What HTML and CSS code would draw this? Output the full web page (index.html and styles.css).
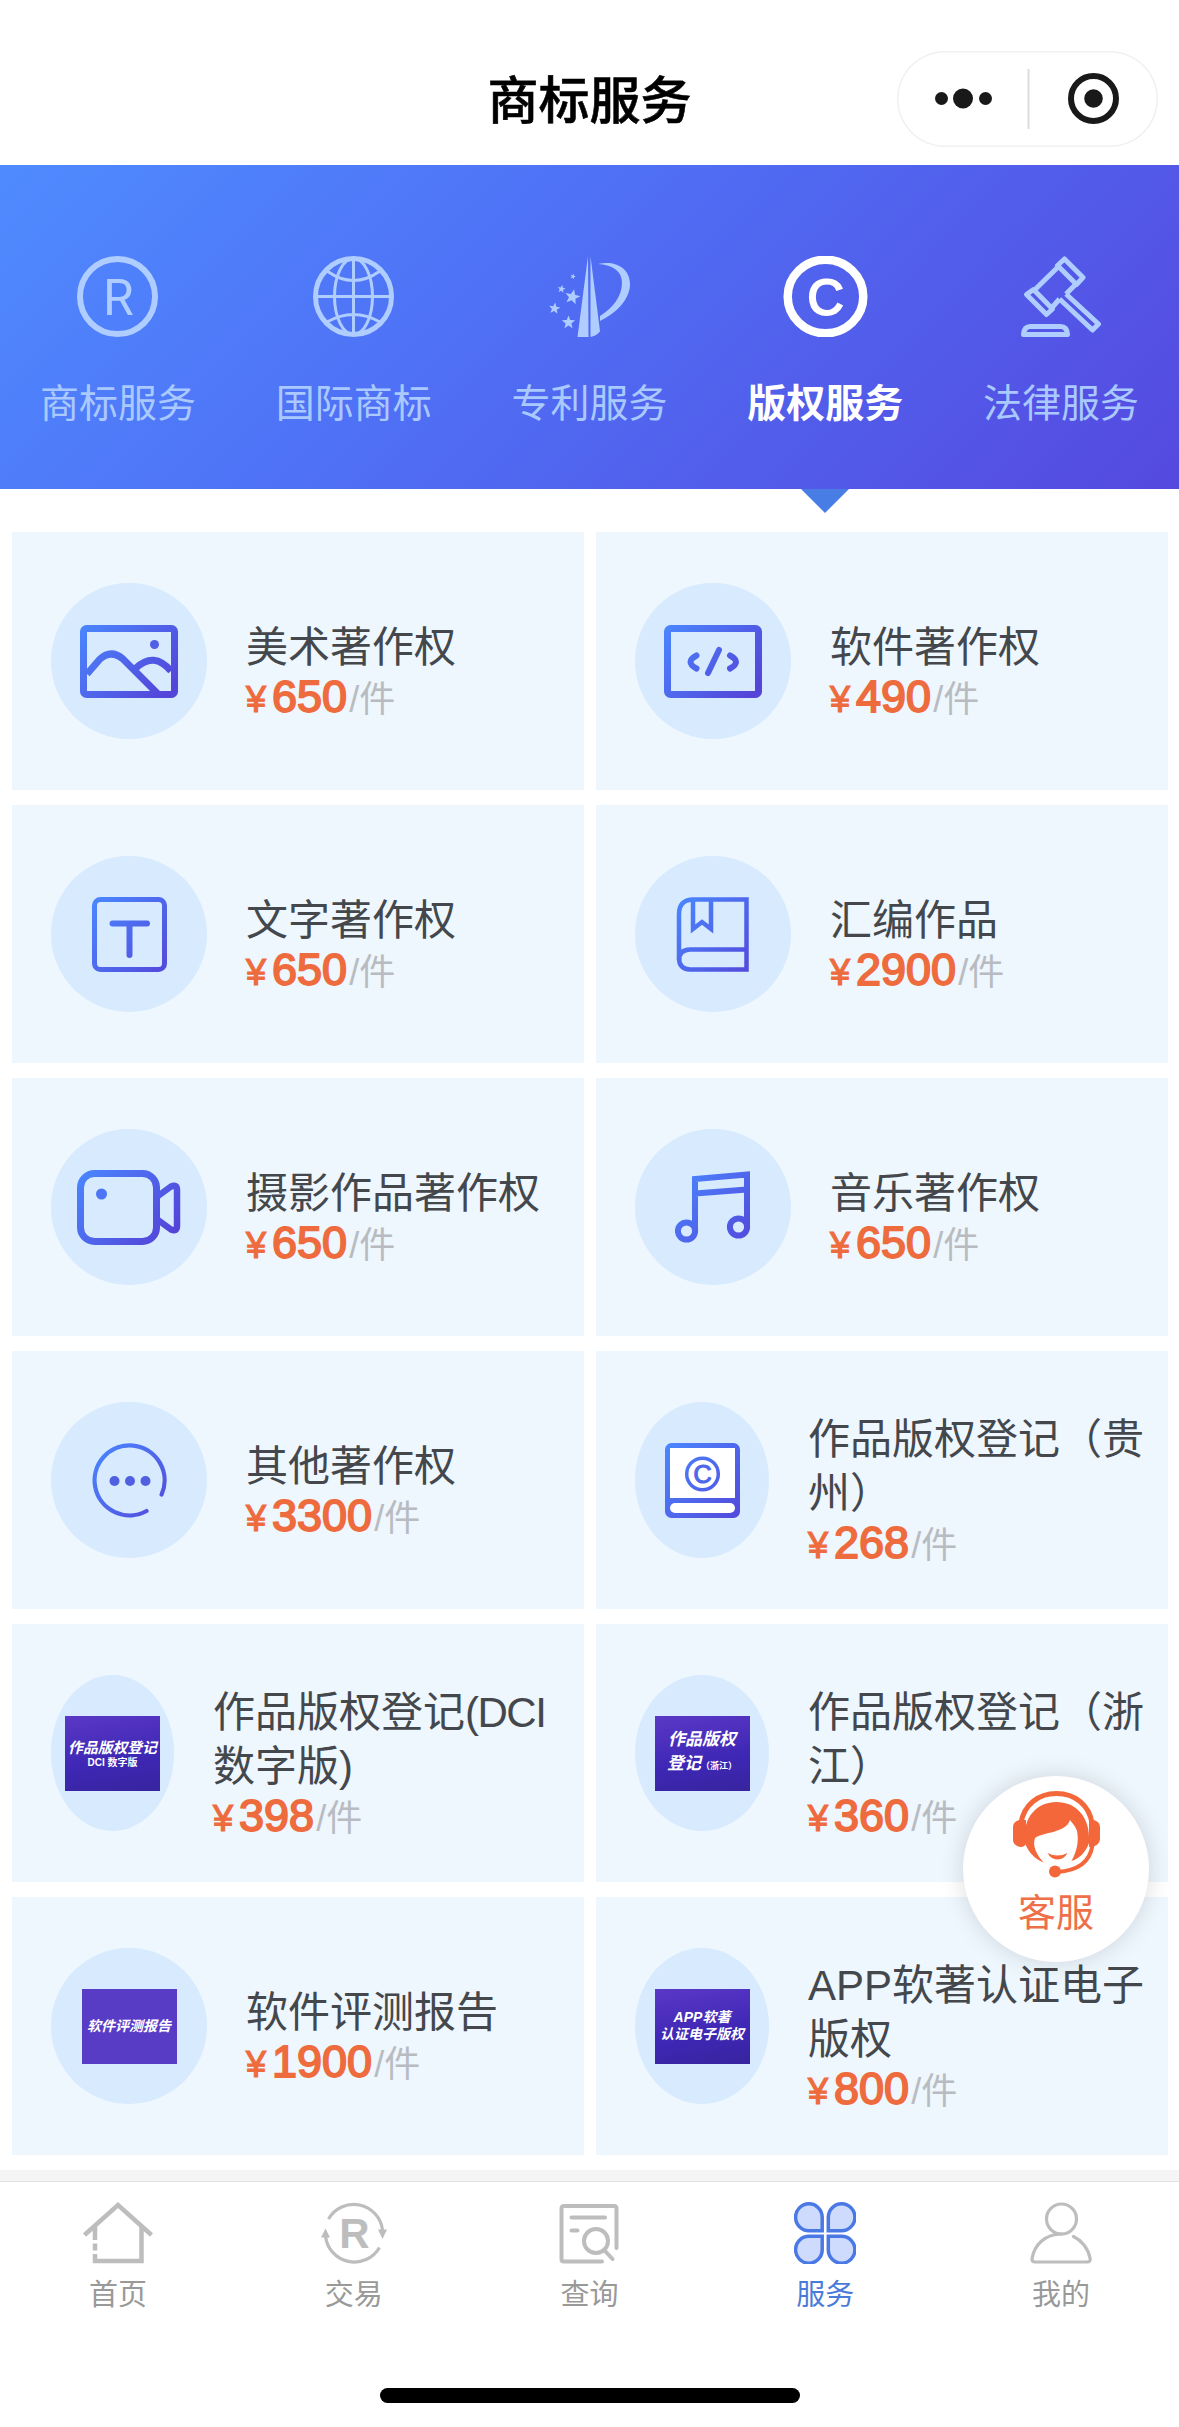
FILE: index.html
```html
<!DOCTYPE html>
<html lang="zh-CN">

<head>
    <meta charset="UTF-8" />
    <meta name="viewport" content="width=device-width, initial-scale=1.0" />
    <title>商标服务</title>
    <link rel="stylesheet" href="styles.css">
</head>

<body>
    <!-- shared gradient and star shape -->
    <svg class="defs" width="0" height="0">
        <defs>
            <linearGradient id="blue" gradientUnits="userSpaceOnUse" x1="0" y1="0" x2="85" y2="75">
                <stop offset="0" stop-color="#4a88ff" />
                <stop offset="1" stop-color="#5444d8" />
            </linearGradient>
            <polygon id="star" points="0,-10 2.6,-3.4 9.5,-3.1 4.1,1.3 5.9,8.1 0,4.3 -5.9,8.1 -4.1,1.3 -9.5,-3.1 -2.6,-3.4" />
        </defs>
    </svg>

    <header class="header">
        <h1>商标服务</h1>
        <div class="capsule">
            <svg width="261" height="96" viewBox="0 0 261 96">
                <circle cx="44.500" cy="47.500" r="6.500" />
                <circle cx="66" cy="47.500" r="10" />
                <circle cx="88.500" cy="47.500" r="6.500" />
                <path d="M131.500 18V78" stroke="#dcdcdc" stroke-width="2" />
                <circle cx="196.500" cy="47.500" r="22.500" fill="none" stroke="#191919" stroke-width="6" />
                <circle cx="196.500" cy="47.500" r="9.300" />
            </svg>
        </div>
    </header>

    <nav class="tabs">
        <div class="tab">
            <svg width="81" height="81" viewBox="0 0 81 81">
                <circle cx="40.500" cy="40.500" r="37.500" fill="none" stroke="currentColor" stroke-width="6" />
                <text class="letter-r" x="41.500" y="59" text-anchor="middle">R</text>
            </svg>
            <span>商标服务</span>
        </div>
        <div class="tab">
            <svg width="81" height="81" viewBox="0 0 81 81" fill="none" stroke="currentColor" stroke-width="3">
                <circle cx="40.500" cy="40.500" r="38" stroke-width="5" />
                <ellipse cx="40.500" cy="40.500" rx="19" ry="38" />
                <path d="M40.500 3V78M3 40.500H78M14 15Q40.500 34 67 15M14 66Q40.500 51 67 66" />
            </svg>
            <span>国际商标</span>
        </div>
        <div class="tab">
            <svg width="81" height="81" viewBox="0 0 81 81" fill="currentColor">
                <path d="M39 0L39.500 81H28.500Z" />
                <path d="M41.500 0L51 75.500Q47 80 41.500 81Z" />
                <path d="M49 8C66 4 81 12 81 28C81 44 66 58 51 65V60C64 52 73 40 73 27C73 15 64 9 49 8Z" />
                <use href="#star" transform="translate(24 20.500) scale(.28) rotate(20)" />
                <use href="#star" transform="translate(12.500 33) scale(.42) rotate(10)" />
                <use href="#star" transform="translate(23.400 41) scale(.8) rotate(12)" />
                <use href="#star" transform="translate(5.500 52.500) scale(.6) rotate(8)" />
                <use href="#star" transform="translate(19.500 66.500) scale(.7)" />
            </svg>
            <span>专利服务</span>
        </div>
        <div class="tab active">
            <svg width="85" height="81" viewBox="0 0 85 81">
                <ellipse cx="42.500" cy="40.500" rx="37.800" ry="36.800" fill="none" stroke="currentColor" stroke-width="8.500" />
                <text class="letter-c" x="42.500" y="58.500" text-anchor="middle">C</text>
            </svg>
            <span>版权服务</span>
        </div>
        <div class="tab">
            <svg width="81" height="81" viewBox="0 0 81 81" fill="none" stroke="currentColor" stroke-width="5" stroke-linejoin="round">
                <path d="M43.500 3L62 21.500L55.500 28.500L36.500 9.500Z" />
                <path d="M37 11L13 34.500M55 28L45 38M31.500 51L38.500 43" />
                <path d="M12.500 33.500L31.500 53L25.500 58.500L5.500 38.500Z" />
                <path d="M45 38L77.500 68L71.500 74L38.500 43" />
                <path d="M2.500 78.500Q3 70.500 9.500 70.500H39.500Q46 70.500 46.500 78.500Z" />
            </svg>
            <span>法律服务</span>
        </div>
    </nav>

    <main class="services">
        <div class="card">
            <div class="icon">
                <svg width="100" height="75" viewBox="0 0 100 75" fill="none" stroke="url(#blue)" stroke-width="7">
                    <rect x="4.500" y="4.500" width="91" height="66" rx="3" />
                    <path d="M8 50L21 35Q32 25 44 35L79 70M57 44Q75 27 92 47" />
                    <circle cx="75.500" cy="20.500" r="4.500" fill="#5260e8" stroke="none" />
                </svg>
            </div>
            <div class="info">
                <h2>美术著作权</h2>
                <p class="price"><i>¥</i><b>650</b>/件</p>
            </div>
        </div>
        <div class="card">
            <div class="icon">
                <svg width="100" height="75" viewBox="0 0 100 75" fill="none" stroke="url(#blue)" stroke-width="7">
                    <rect x="4.500" y="4.500" width="91" height="66" rx="3" />
                    <path d="M33.500 31.500Q21.500 38 33.500 44.500M67 31.500Q79 38 67 44.500M56 26L45 49" stroke-width="6" stroke-linecap="round" />
                </svg>
            </div>
            <div class="info">
                <h2>软件著作权</h2>
                <p class="price"><i>¥</i><b>490</b>/件</p>
            </div>
        </div>
        <div class="card">
            <div class="icon">
                <svg width="75" height="75" viewBox="0 0 75 75" fill="none" stroke="url(#blue)" stroke-width="5">
                    <rect x="2.500" y="2.500" width="70" height="70" rx="6" />
                    <path d="M20.500 26.500H55M37.500 26.500V58" stroke-width="6" stroke-linecap="round" />
                </svg>
            </div>
            <div class="info">
                <h2>文字著作权</h2>
                <p class="price"><i>¥</i><b>650</b>/件</p>
            </div>
        </div>
        <div class="card">
            <div class="icon">
                <svg width="75" height="75" viewBox="0 0 75 75" fill="none" stroke="url(#blue)" stroke-width="4.500">
                    <path d="M70.500 2.500H16Q3 3.500 3 17V61Q3 72 14 72.500H70.500Z" />
                    <path d="M70.500 52.500H14Q3 53 3 63M17 2.500V32L26 25L35 32V2.500" />
                </svg>
            </div>
            <div class="info">
                <h2>汇编作品</h2>
                <p class="price"><i>¥</i><b>2900</b>/件</p>
            </div>
        </div>
        <div class="card">
            <div class="icon">
                <svg width="104" height="75" viewBox="0 0 104 75" fill="none" stroke="url(#blue)" stroke-width="7">
                    <rect x="3.500" y="3.500" width="76" height="68" rx="14" />
                    <path d="M81 26L94 16.500Q100 14 100 20V56Q100 62 94 59.500L81 50" stroke-width="6.500" />
                    <circle cx="24.500" cy="24" r="5.500" fill="#4d75f5" stroke="none" />
                </svg>
            </div>
            <div class="info">
                <h2>摄影作品著作权</h2>
                <p class="price"><i>¥</i><b>650</b>/件</p>
            </div>
        </div>
        <div class="card">
            <div class="icon">
                <svg width="77" height="75" viewBox="0 0 77 75" fill="none" stroke="url(#blue)" stroke-width="6">
                    <path d="M20 61V9L72 4.500V57M20 23.500L72 19.500" />
                    <circle cx="11.500" cy="61" r="8.600" />
                    <circle cx="63.500" cy="57" r="8.600" />
                </svg>
            </div>
            <div class="info">
                <h2>音乐著作权</h2>
                <p class="price"><i>¥</i><b>650</b>/件</p>
            </div>
        </div>
        <div class="card">
            <div class="icon">
                <svg width="75" height="75" viewBox="0 0 75 75" fill="none" stroke="url(#blue)" stroke-width="4.200" stroke-linecap="round">
                    <path d="M69.600 51.500A35 35 0 1 0 54.500 68" />
                    <g fill="#5060e0" stroke="none">
                        <circle cx="22.500" cy="38" r="5" />
                        <circle cx="38" cy="38" r="5" />
                        <circle cx="53.500" cy="38" r="5" />
                    </g>
                </svg>
            </div>
            <div class="info">
                <h2>其他著作权</h2>
                <p class="price"><i>¥</i><b>3300</b>/件</p>
            </div>
        </div>
        <div class="card">
            <div class="icon oval">
                <svg width="75" height="75" viewBox="0 0 75 75" stroke="url(#blue)">
                    <rect x="2.500" y="2.500" width="70" height="70" rx="4" fill="url(#blue)" stroke-width="5" />
                    <path d="M5 5H70V55H5Z" fill="#fff" stroke="none" />
                    <rect x="5" y="60" width="65" height="10" rx="5" fill="#fff" stroke="none" />
                    <circle cx="37.500" cy="31" r="15.800" fill="none" stroke-width="3.500" />
                    <text class="small-c" x="37.500" y="39.500" text-anchor="middle">C</text>
                </svg>
            </div>
            <div class="info">
                <h2>作品版权登记（贵<br>州）</h2>
                <p class="price"><i>¥</i><b>268</b>/件</p>
            </div>
        </div>
        <div class="card">
            <div class="icon slim">
                <div class="cover">
                    <span class="t15">作品版权登记</span>
                    <span class="t10">DCI 数字版</span>
                </div>
            </div>
            <div class="info">
                <h2>作品版权登记<span class="latin">(DCI</span><br>数字版)</h2>
                <p class="price"><i>¥</i><b>398</b>/件</p>
            </div>
        </div>
        <div class="card">
            <div class="icon oval">
                <div class="cover">
                    <span class="t17">作品版权</span>
                    <span class="t17">登记<small>（浙江）</small></span>
                </div>
            </div>
            <div class="info">
                <h2>作品版权登记（浙<br>江）</h2>
                <p class="price"><i>¥</i><b>360</b>/件</p>
            </div>
        </div>
        <div class="card">
            <div class="icon">
                <div class="cover plain">
                    <span class="t14">软件评测报告</span>
                </div>
            </div>
            <div class="info">
                <h2>软件评测报告</h2>
                <p class="price"><i>¥</i><b>1900</b>/件</p>
            </div>
        </div>
        <div class="card">
            <div class="icon oval">
                <div class="cover">
                    <span class="t14">APP软著</span>
                    <span class="t14">认证电子版权</span>
                </div>
            </div>
            <div class="info">
                <h2>APP软著认证电子<br>版权</h2>
                <p class="price"><i>¥</i><b>800</b>/件</p>
            </div>
        </div>
    </main>

    <footer class="tabbar">
        <div class="bar-item">
            <svg width="70" height="62" viewBox="0 0 70 62" fill="none" stroke="currentColor" stroke-width="4.500">
                <path d="M1.500 33L35 3L68.500 33M12 24V38M12 41.500V48.500M12 52V59H58.500V24" />
            </svg>
            <span>首页</span>
        </div>
        <div class="bar-item">
            <svg width="66" height="62" viewBox="0 0 66 62" fill="none" stroke="currentColor" stroke-width="3.200">
                <path d="M7.500 17A29 29 0 0 1 61.500 28M58.500 45.500A29 29 0 0 1 4.500 34" />
                <path d="M57 27.500H66L61.500 37ZM0 35.500H9L4.500 26.500Z" fill="currentColor" stroke="none" />
                <text class="bold-r" x="33.500" y="45.500" text-anchor="middle" stroke="none">R</text>
            </svg>
            <span>交易</span>
        </div>
        <div class="bar-item">
            <svg width="62" height="62" viewBox="0 0 62 62" fill="none" stroke="currentColor" stroke-width="4" stroke-linecap="round">
                <path d="M44 59.500H6Q3.500 59.500 3.500 57V6.500Q3.500 4 6 4H56Q58.500 4 58.500 6.500V46" />
                <path d="M13.500 15.500H47M13.500 28.500H19.500M47 49L54.500 57" />
                <circle cx="38" cy="39" r="12" />
            </svg>
            <span>查询</span>
        </div>
        <div class="bar-item active">
            <svg width="62" height="62" viewBox="0 0 62 62" fill="#cfdbfd" stroke="#4a78e4" stroke-width="3.500">
                <path id="petal" d="M28.200 15.300V28.800H15.300A13.300 13.500 0 1 1 28.200 15.300Z" />
                <use href="#petal" transform="matrix(-1 0 0 1 62.500 0)" />
                <use href="#petal" transform="matrix(1 0 0 -1 0 63)" />
                <use href="#petal" transform="matrix(-1 0 0 -1 62.500 63)" />
            </svg>
            <span>服务</span>
        </div>
        <div class="bar-item">
            <svg width="62" height="62" viewBox="0 0 62 62" fill="none" stroke="currentColor" stroke-width="3.200" stroke-linecap="round">
                <circle cx="31.500" cy="17" r="15" />
                <path d="M31.500 32C15 32 4 43 2 57Q2 60 5 60H57Q61 60 60 56C58 46 51 38 43.500 34.500" />
            </svg>
            <span>我的</span>
        </div>
    </footer>
    <div class="home-indicator"></div>

    <div class="kefu">
        <svg width="87" height="87" viewBox="0 0 87 87" fill="#f4673a">
            <path d="M8 32C11 14 25 2.500 43.500 2.500S76 14 79 32" fill="none" stroke="#f4673a" stroke-width="5" />
            <path d="M6 29H13V53Q11 56.500 7 56Q0 54 0 49V36Q0 31 6 29ZM81 29H76V56Q87 55 87 48V36Q87 31 81 29Z" />
            <path d="M12 52C9 25 25 11 43.500 11C62 11 78 25 76 52C73 61 66 68 58.500 70C64 60 66 50 64 40C62 34 59 32 57 29C53 42 30 41 22 47C19 55 24 64 30.500 71.500C22 68 15 61 12 52Z" />
            <path d="M34.500 62Q44.500 67 54.500 62Q51 68.500 44.500 68.500T34.500 62Z" />
            <path d="M79.500 54Q76 79 44 81" fill="none" stroke="#f4673a" stroke-width="4" />
            <circle cx="42" cy="80.500" r="6" />
        </svg>
        <span>客服</span>
    </div>
</body>

</html>
```
FILE: styles.css
```css
* {
    margin: 0;
    padding: 0;
    box-sizing: border-box;
}

body {
    width: 1179px;
    height: 2427px;
    overflow: hidden;
    position: relative;
    background-color: #fff;
    font-family: "Liberation Sans", "Noto Sans CJK SC", sans-serif;
}

svg {
    display: block;
    flex-shrink: 0;
}

.defs {
    position: absolute;
}

.header {
    height: 165px;
    padding-top: 38px;
    position: relative;
    display: flex;
    align-items: center;
    justify-content: center;
}

.header h1 {
    font-size: 51px;
    font-weight: 500;
    line-height: 60px;
    color: #000;
    -webkit-text-stroke: 0.6px #000;
}

.capsule {
    position: absolute;
    top: 51px;
    right: 21px;
    width: 261px;
    height: 96px;
    border-radius: 48px;
    box-shadow: inset 0 0 0 1.5px #f0f0f0;
    fill: #191919;
}

.tabs {
    height: 324px;
    padding-top: 91px;
    display: flex;
    background: linear-gradient(135deg, #4f8bff 0%, #4f70f5 42%, #5549df 100%);
    color: #b0cdff;
}

.tab {
    flex: 1;
    position: relative;
    display: flex;
    flex-direction: column;
    align-items: center;
}

.tab span {
    margin-top: 38px;
    font-size: 39px;
    line-height: 58px;
    color: #a9c9ff;
}

.tab.active,
.tab.active span {
    color: #fff;
    font-weight: bold;
}

.tab.active::after {
    content: "";
    position: absolute;
    top: 233px;
    border: 24px solid transparent;
    border-top-color: #477de5;
    border-bottom: none;
}

.letter-r {
    font: 400 50px Roboto, sans-serif;
    fill: currentColor;
}

.letter-c {
    font: 50px "Liberation Sans", sans-serif;
    fill: currentColor;
    stroke: currentColor;
    stroke-width: 2.2;
}

.small-c {
    font: 25px "Liberation Sans", sans-serif;
    fill: #4f68ea;
    stroke: #4f68ea;
    stroke-width: 1.2;
}

.bold-r {
    font: bold 42px "Liberation Sans", sans-serif;
    fill: currentColor;
}

.services {
    padding: 43px 11px 26px 12px;
    display: grid;
    grid-template-columns: 1fr 1fr;
    grid-auto-rows: 258px;
    gap: 15px 12px;
}

.card {
    padding-left: 39px;
    display: flex;
    align-items: center;
    gap: 39px;
    background-color: #eef6fe;
}

.icon {
    width: 156px;
    height: 156px;
    flex-shrink: 0;
    display: flex;
    align-items: center;
    justify-content: center;
    border-radius: 50%;
    background-color: #d7eafe;
}

.icon.oval {
    width: 134px;
}

.icon.slim {
    width: 123px;
}

.info {
    padding-top: 18px;
    white-space: nowrap;
}

.info h2 {
    font-size: 42px;
    font-weight: normal;
    line-height: 54px;
    color: #44484c;
}

.latin {
    letter-spacing: -1.5px;
}

.price {
    height: 47px;
    margin-top: -2px;
    font-size: 36px;
    line-height: 47px;
    color: #b8bcc0;
}

/* regular weight with a thin outline reads as medium */
.price i,
.price b {
    font-style: normal;
    font-weight: normal;
    color: #ee6b3e;
    -webkit-text-stroke: 1.8px #ee6b3e;
}

.price i {
    margin-right: 6px;
    -webkit-text-stroke-width: 1.2px;
}

.price b {
    margin-right: 2px;
    font-size: 45px;
}

.cover {
    width: 95px;
    height: 75px;
    flex-shrink: 0;
    display: flex;
    flex-direction: column;
    align-items: center;
    justify-content: center;
    background: linear-gradient(170deg, #5b38c6, #3d27b4 60%, #38249f);
    color: #fff;
    font-weight: bold;
    font-style: italic;
    white-space: nowrap;
}

.cover.plain {
    background: #593cc6;
}

.t15 {
    margin-top: 3px;
    font-size: 14.8px;
    line-height: 16px;
}

.t10 {
    font-size: 10px;
    font-style: normal;
    line-height: 14px;
}

.t17 {
    font-size: 17px;
    line-height: 24px;
}

.t17 small {
    font-size: 9px;
    font-style: normal;
}

.t14 {
    font-size: 14px;
    line-height: 17px;
}

.tabbar {
    height: 207px;
    padding-top: 20px;
    display: flex;
    border-top: 1px solid #e0e0e0;
    box-shadow: 0 -11px 0 #f5f5f5;
    color: #bdbdbd;
}

.bar-item {
    flex: 1;
    display: flex;
    flex-direction: column;
    align-items: center;
}

.bar-item span {
    margin-top: 10px;
    font-size: 29px;
    line-height: 42px;
    color: #999;
}

.bar-item.active span {
    color: #4a7bd9;
}

.home-indicator {
    width: 420px;
    height: 15px;
    margin: 0 auto;
    border-radius: 8px;
    background-color: #000;
}

.kefu {
    position: absolute;
    top: 1776px;
    right: 30px;
    width: 186px;
    height: 186px;
    padding-top: 15px;
    display: flex;
    flex-direction: column;
    align-items: center;
    border-radius: 50%;
    background-color: #fff;
    box-shadow: 0 0 24px rgba(0, 0, 0, 0.14);
}

.kefu span {
    margin-top: 7px;
    font-size: 38px;
    line-height: 56px;
    color: #ee7048;
}
```
